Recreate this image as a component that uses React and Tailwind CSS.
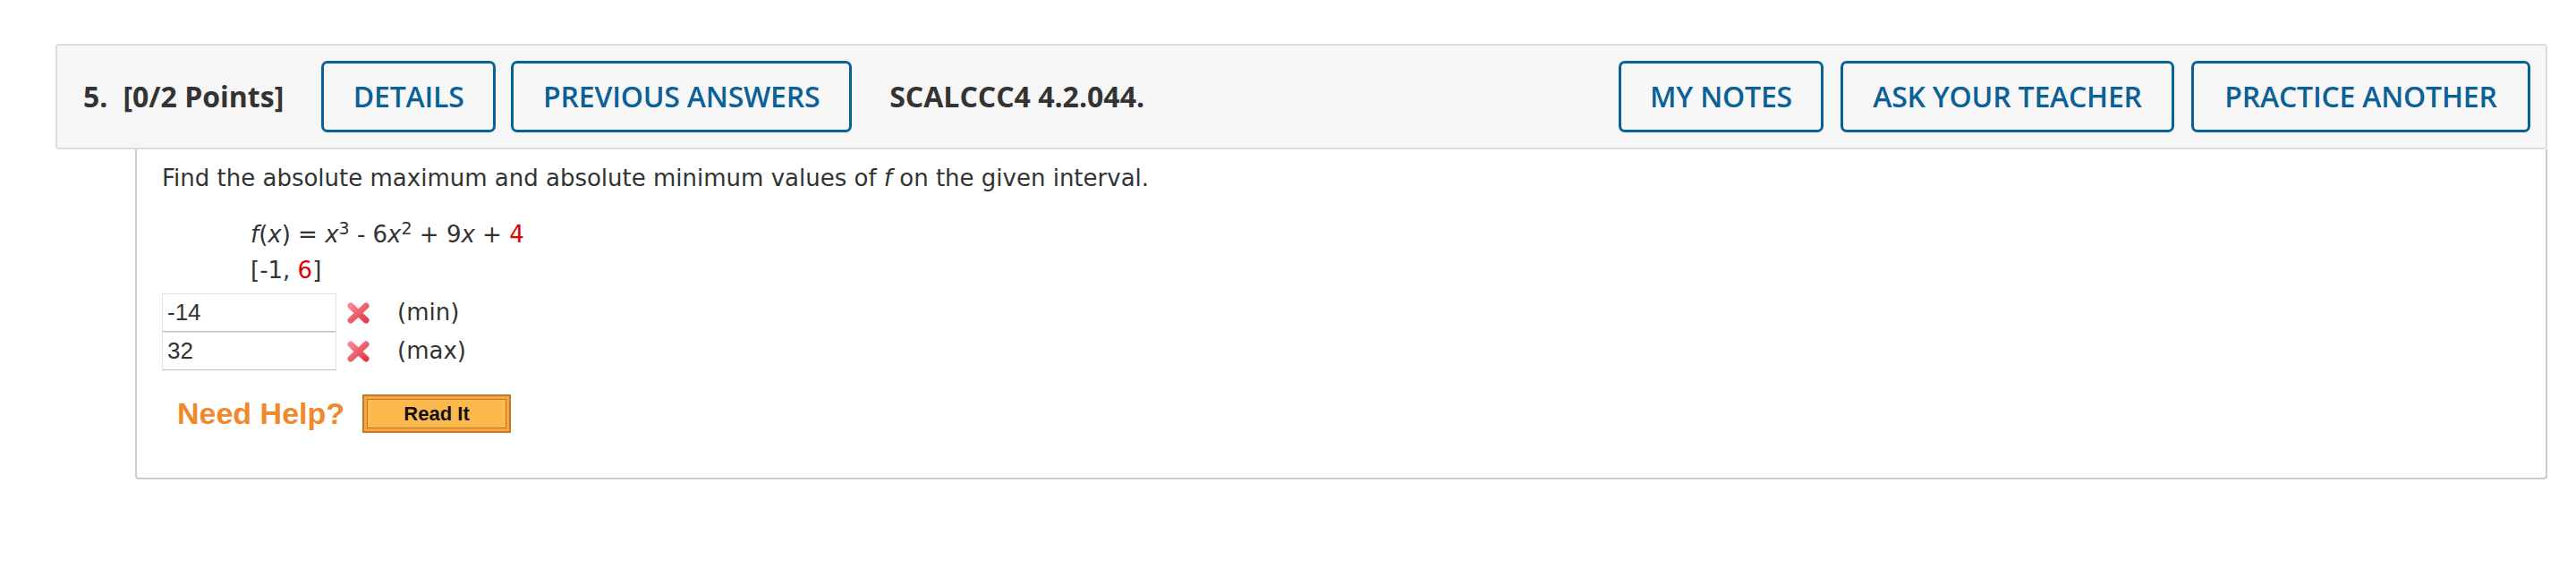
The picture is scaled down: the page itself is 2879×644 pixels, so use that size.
import React from "react";

const headerFont = { fontFamily: '"Open Sans", "Liberation Sans", sans-serif' };
const bodyFont = { fontFamily: '"DejaVu Sans", Verdana, sans-serif' };
const arialFont = { fontFamily: '"Liberation Sans", Arial, sans-serif' };

function OutlineButton({ label, width }) {
    return (
        <div
            className={`${width} h-[80px] shrink-0 flex items-center justify-center border-[3px] border-[#0a6197] rounded-[7px] bg-[#f7f7f7] text-[#0a6197] text-[32px] font-semibold tracking-[-0.2px]`}
        >
            {label}
        </div>
    );
}

function WrongMark() {
    return (
        <svg width="27" height="26" viewBox="0 0 27 26" className="shrink-0">
            <defs>
                <linearGradient id="xg" x1="0" y1="0" x2="1" y2="1">
                    <stop offset="0" stopColor="#f8838c" />
                    <stop offset="1" stopColor="#e23d4d" />
                </linearGradient>
            </defs>
            <path
                d="M5 5 L22 21 M22 5 L5 21"
                stroke="url(#xg)"
                strokeWidth="7"
                strokeLinecap="round"
                fill="none"
            />
        </svg>
    );
}

function AnswerRow({ value, label }) {
    return (
        <div className="flex items-center">
            <div
                className="w-[195px] h-[43px] border border-[#e2e2e2] border-b-[#bdbdbd] bg-white flex items-center pl-[5px] text-[26px] text-[#333]"
                style={arialFont}
            >
                {value}
            </div>
            <div className="ml-[11px]">
                <WrongMark />
            </div>
            <span className="ml-[30px] text-[26px] text-[#333]" style={bodyFont}>
                {label}
            </span>
        </div>
    );
}

export default function App() {
    return (
        <div className="w-[2879px] h-[644px] bg-white pt-[49px] pl-[62px] pr-[32px]">
            {/* question header */}
            <div
                className="h-[118px] flex items-center border-2 border-[#dddddd] rounded-[4px] bg-[#f6f6f6] pl-[29px] pr-[17px] text-[#333]"
                style={headerFont}
            >
                <span className="text-[32px] font-bold">5.</span>
                <span className="ml-[17px] text-[32px] font-bold">[0/2 Points]</span>
                <div className="ml-[42px] flex gap-[17px]">
                    <OutlineButton label="DETAILS" width="w-[195px]" />
                    <OutlineButton label="PREVIOUS ANSWERS" width="w-[381px]" />
                </div>
                <span className="ml-[42px] text-[32px] font-bold">SCALCCC4 4.2.044.</span>
                <div className="flex-1" />
                <div className="flex gap-[19px]">
                    <OutlineButton label="MY NOTES" width="w-[229px]" />
                    <OutlineButton label="ASK YOUR TEACHER" width="w-[373px]" />
                    <OutlineButton label="PRACTICE ANOTHER" width="w-[379px]" />
                </div>
            </div>

            {/* question body */}
            <div className="ml-[89px] h-[369px] border-2 border-t-0 border-[#cccccc] rounded-b-[4px] pt-[17px] pl-[28px]">
                <p className="text-[26px] leading-[30px] text-[#333]" style={bodyFont}>
                    Find the absolute maximum and absolute minimum values of <i>f</i> on the given interval.
                </p>
                <div className="mt-[28px] ml-[99px] text-[26px] leading-[40px] text-[#333]" style={bodyFont}>
                    <div>
                        <i>f</i>(<i>x</i>) = <i>x</i>
                        <sup className="text-[19px]">3</sup> - 6<i>x</i>
                        <sup className="text-[19px]">2</sup> + 9<i>x</i> +{" "}
                        <span className="text-[#e00000]">4</span>
                    </div>
                    <div>
                        [-1, <span className="text-[#e00000]">6</span>]
                    </div>
                </div>
                <div className="mt-[6px]">
                    <AnswerRow value="-14" label="(min)" />
                    <AnswerRow value="32" label="(max)" />
                </div>
                <div className="mt-[23px] flex items-center">
                    <span
                        className="ml-[17px] text-[34px] font-bold text-[#ef8a2b]"
                        style={arialFont}
                    >
                        Need Help?
                    </span>
                    <div className="ml-[20px] w-[166px] h-[43px] border-2 border-[#c27833] bg-[#f7a43d] p-[3px]">
                        <div
                            className="h-full border border-[#b9792f] bg-[#fdb94e] flex items-center justify-center text-[22px] font-bold text-[#111]"
                            style={arialFont}
                        >
                            Read It
                        </div>
                    </div>
                </div>
            </div>
        </div>
    );
}
